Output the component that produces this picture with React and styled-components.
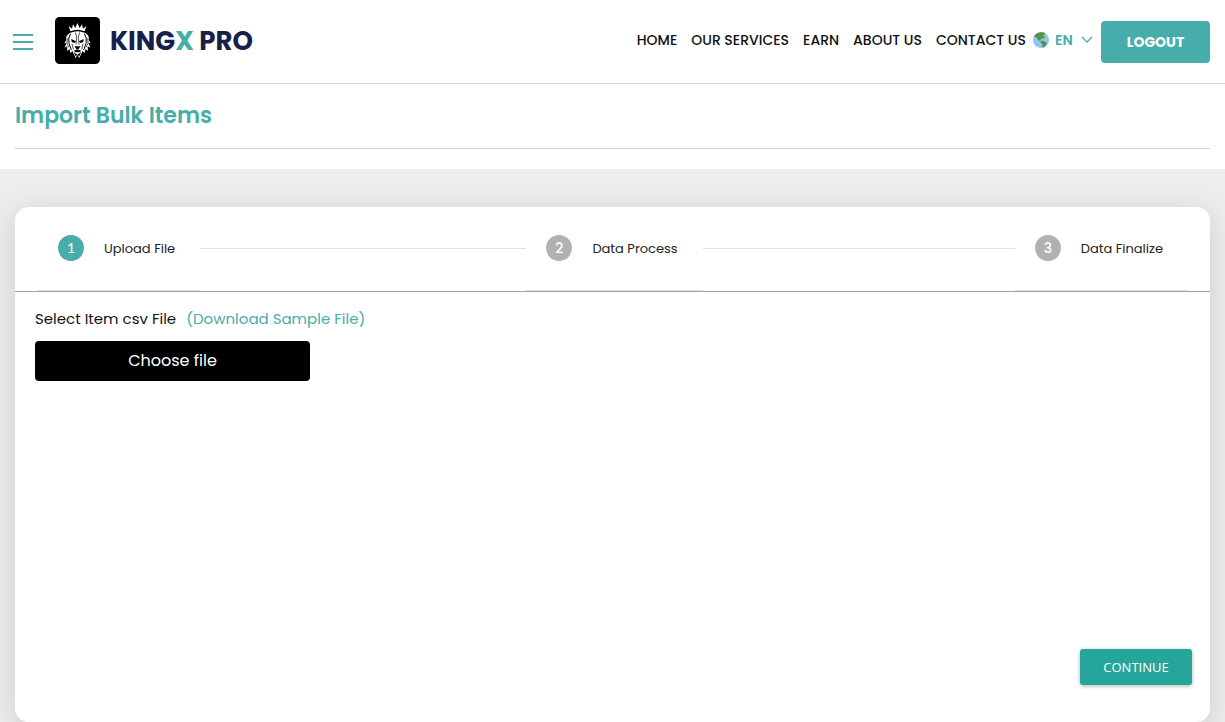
import React, { useState } from "react";
import styled, { createGlobalStyle, css } from "styled-components";

const teal = "#46adab";

const GlobalStyle = createGlobalStyle`
  * {
    box-sizing: border-box;
  }

  body {
    margin: 0;
    background: #ededed;
    color: #111;
    font-family: Poppins, Inter, sans-serif;
  }

  button,
  select,
  input {
    font-family: inherit;
  }
`;

const Page = styled.div`
  display: flex;
  flex-direction: column;
  min-height: 100vh;
`;

const Header = styled.header`
  display: flex;
  align-items: center;
  height: 84px;
  padding: 0 15px 0 13px;
  background: #fff;
  border-bottom: 1px solid #d9d9d9;
`;

const MenuButton = styled.button`
  display: flex;
  flex-direction: column;
  gap: 5px;
  width: 20px;
  padding: 0;
  border: none;
  background: none;
  cursor: pointer;
`;

const MenuBar = styled.span`
  height: 2px;
  background: ${teal};
`;

const Brand = styled.a`
  display: flex;
  align-items: center;
  gap: 10px;
  margin-left: 22px;
  padding-bottom: 2px;
  color: #171f4b;
  font-size: 26px;
  font-weight: 700;
  line-height: 48px;
  text-decoration: none;
  white-space: nowrap;
`;

const BrandAccent = styled.span`
  color: ${teal};
`;

const Nav = styled.nav`
  display: flex;
  align-items: center;
  gap: 14px;
  margin-left: auto;
  padding-bottom: 4px;
`;

const NavLink = styled.a`
  color: #111;
  font-size: 14px;
  font-weight: 500;
  line-height: 20px;
  text-decoration: none;
  white-space: nowrap;
`;

const Language = styled.label`
  display: flex;
  align-items: center;
  gap: 6px;
  margin-left: 7px;
  padding-bottom: 4px;
`;

const LanguageSelect = styled.select`
  appearance: none;
  width: 20px;
  padding: 0;
  border: none;
  background: none;
  color: ${teal};
  font-size: 14px;
  font-weight: 600;
  line-height: 20px;
  cursor: pointer;
`;

const LogoutButton = styled.button`
  width: 109px;
  height: 42px;
  margin-left: 8px;
  padding: 2px 0 0;
  border: none;
  border-radius: 4px;
  background: ${teal};
  color: #fff;
  font-size: 14px;
  font-weight: 700;
  cursor: pointer;
`;

const TitleBar = styled.div`
  padding: 14px 15px 20px;
  background: #fff;
`;

const Title = styled.h1`
  margin: 0;
  padding-bottom: 14px;
  border-bottom: 1px solid #d4d4d4;
  color: ${teal};
  font-size: 22px;
  font-weight: 600;
  line-height: 36px;
`;

const Main = styled.main`
  display: flex;
  flex: 1;
  padding: 38px 15px 0;
`;

const Card = styled.section`
  display: flex;
  flex: 1;
  flex-direction: column;
  border-radius: 14px;
  background: #fff;
  box-shadow: 0 6px 30px rgba(0, 0, 0, 0.14);
`;

const Steps = styled.ol`
  display: grid;
  grid-template-columns: 1fr 1fr auto;
  height: 85px;
  margin: 0;
  padding: 0 22px 0 23px;
  border-bottom: 1px solid #a3a3a3;
  list-style: none;
`;

const Step = styled.li`
  display: flex;
`;

const StepBody = styled.div`
  display: flex;
  align-items: center;
  gap: 20px;
  padding: 0 25px 1px 20px;
  border-bottom: 1px solid #dcdcdc;
  font-size: 13px;
  line-height: 22px;
  white-space: nowrap;
`;

const StepText = styled.span`
  padding-top: 2px;
  color: #222;
`;

const StepNumber = styled.span`
  width: 26px;
  border-radius: 50%;
  background: #b1b1b1;
  color: #fff;
  font-size: 14px;
  font-weight: 500;
  line-height: 26px;
  text-align: center;

  ${({ $active }) =>
    $active &&
    css`
      background: ${teal};
      font-family: Lato, sans-serif;
      font-weight: 400;
    `}
`;

const StepLine = styled.span`
  flex: 1;
  height: 1px;
  margin-top: 41px;
  background: #e0e0e0;
`;

const Form = styled.form`
  display: flex;
  flex: 1;
  flex-direction: column;
  align-items: flex-start;
  padding: 15px 18px 37px 20px;
`;

const FieldLabel = styled.div`
  display: flex;
  gap: 10px;
  font-size: 15px;
  line-height: 24px;
`;

const SampleLink = styled.a`
  color: ${teal};
  text-decoration: none;
`;

const FileButton = styled.label`
  position: relative;
  width: 275px;
  margin-top: 10px;
  border-radius: 4px;
  background: #000;
  color: #fff;
  font-size: 16px;
  line-height: 40px;
  text-align: center;
  cursor: pointer;
`;

const FileInput = styled.input`
  position: absolute;
  inset: 0;
  width: 100%;
  opacity: 0;
  cursor: pointer;
`;

const ContinueButton = styled.button`
  width: 112px;
  height: 36px;
  margin-top: auto;
  margin-left: auto;
  padding: 0;
  border: none;
  border-radius: 3px;
  background: #26a69a;
  box-shadow: 0 1px 4px rgba(0, 0, 0, 0.3);
  color: #fff;
  font-family: "Open Sans", sans-serif;
  font-size: 13px;
  cursor: pointer;
`;

const navItems = ["HOME", "OUR SERVICES", "EARN", "ABOUT US", "CONTACT US"];
const steps = ["Upload File", "Data Process", "Data Finalize"];

const LionLogo = () => (
  <svg width="45" height="47" viewBox="0 0 135 141" aria-hidden="true">
    <rect width="135" height="141" rx="14" fill="#000" />
    <g fill="#fff">
      <path d="M46 43 L41 27 L51 35 L54 22 L61 33 L67 18 L74 33 L81 22 L84 35 L94 27 L89 43 Q67 34 46 43Z" />
      <path d="M46 47 Q30 55 34 69 L28 79 L35 77 L29 92 L37 88 L36 102 L43 96 L47 109 L52 101 L62 123 L67 113 L73 123 L83 101 L88 109 L92 96 L99 102 L98 88 L106 92 L100 77 L107 79 L101 69 Q105 55 89 47 Q67 38 46 47Z" />
    </g>
    <g fill="#000">
      <path d="M49 66 L63 73 L59 78 L50 75Z" />
      <path d="M86 66 L72 73 L76 78 L85 75Z" />
      <path d="M58 88 H77 L71 96 H64Z" />
      <path d="M56 101 L67 97 L79 101 L73 106 H62Z" />
      <path d="M56 105 L67 113 L79 105 L73 118 L67 113 L62 118Z" />
    </g>
    <g fill="none" stroke="#000" strokeWidth="3">
      <path d="M47 50 Q38 62 42 79 L49 99 M88 50 Q97 62 93 79 L86 99" />
      <path d="M61 46 L65 60 L63 83 M74 46 L70 60 L72 83" strokeWidth="2" />
      <path d="M37 64 L36 79 L42 91 M98 64 L99 79 L93 91" strokeWidth="2" />
      <path d="M51 80 L55 97 M84 80 L80 97" strokeWidth="2" />
    </g>
  </svg>
);

const Globe = () => (
  <svg width="16" height="16" viewBox="0 0 30 30" aria-hidden="true">
    <circle cx="15" cy="15" r="15" fill="#88c9f9" />
    <path
      d="M4 5 Q11 -1 21 1 L23 5 L18 6 L23 10 L20 12 L16 12 L13 17 L9 14 L6 10 L2 9Z M15 16 L20 17 L26 20 L24 25 L20 29 L17 27 L18 23 L14 20Z"
      fill="#5c913b"
    />
  </svg>
);

const App = () => {
  const [language, setLanguage] = useState("EN");
  const [fileName, setFileName] = useState("");

  return (
    <Page>
      <GlobalStyle />
      <Header>
        <MenuButton type="button" aria-label="Menu">
          <MenuBar />
          <MenuBar />
          <MenuBar />
        </MenuButton>
        <Brand href="#">
          <LionLogo />
          <span>
            KING<BrandAccent>X</BrandAccent> PRO
          </span>
        </Brand>
        <Nav>
          {navItems.map((item) => (
            <NavLink href="#" key={item}>
              {item}
            </NavLink>
          ))}
        </Nav>
        <Language>
          <Globe />
          <LanguageSelect
            aria-label="Language"
            value={language}
            onChange={(e) => setLanguage(e.target.value)}
          >
            <option>EN</option>
            <option>FR</option>
          </LanguageSelect>
          <svg width="12" height="8" viewBox="0 0 12 8" aria-hidden="true">
            <path d="M1 1 L6 6 L11 1" fill="none" stroke={teal} strokeWidth="1.3" />
          </svg>
        </Language>
        <LogoutButton type="button">LOGOUT</LogoutButton>
      </Header>

      <TitleBar>
        <Title>Import Bulk Items</Title>
      </TitleBar>

      <Main>
        <Card>
          <Steps>
            {steps.map((step, index) => (
              <Step key={step}>
                <StepBody>
                  <StepNumber $active={index === 0}>{index + 1}</StepNumber>
                  <StepText>{step}</StepText>
                </StepBody>
                {index < steps.length - 1 && <StepLine />}
              </Step>
            ))}
          </Steps>
          <Form onSubmit={(e) => e.preventDefault()}>
            <FieldLabel>
              <label htmlFor="csv-file">Select Item csv File</label>
              <SampleLink href="#">(Download Sample File)</SampleLink>
            </FieldLabel>
            <FileButton>
              {fileName || "Choose file"}
              <FileInput
                id="csv-file"
                type="file"
                accept=".csv"
                onChange={(e) => setFileName(e.target.files[0]?.name || "")}
              />
            </FileButton>
            <ContinueButton type="submit">CONTINUE</ContinueButton>
          </Form>
        </Card>
      </Main>
    </Page>
  );
};

export default App;
